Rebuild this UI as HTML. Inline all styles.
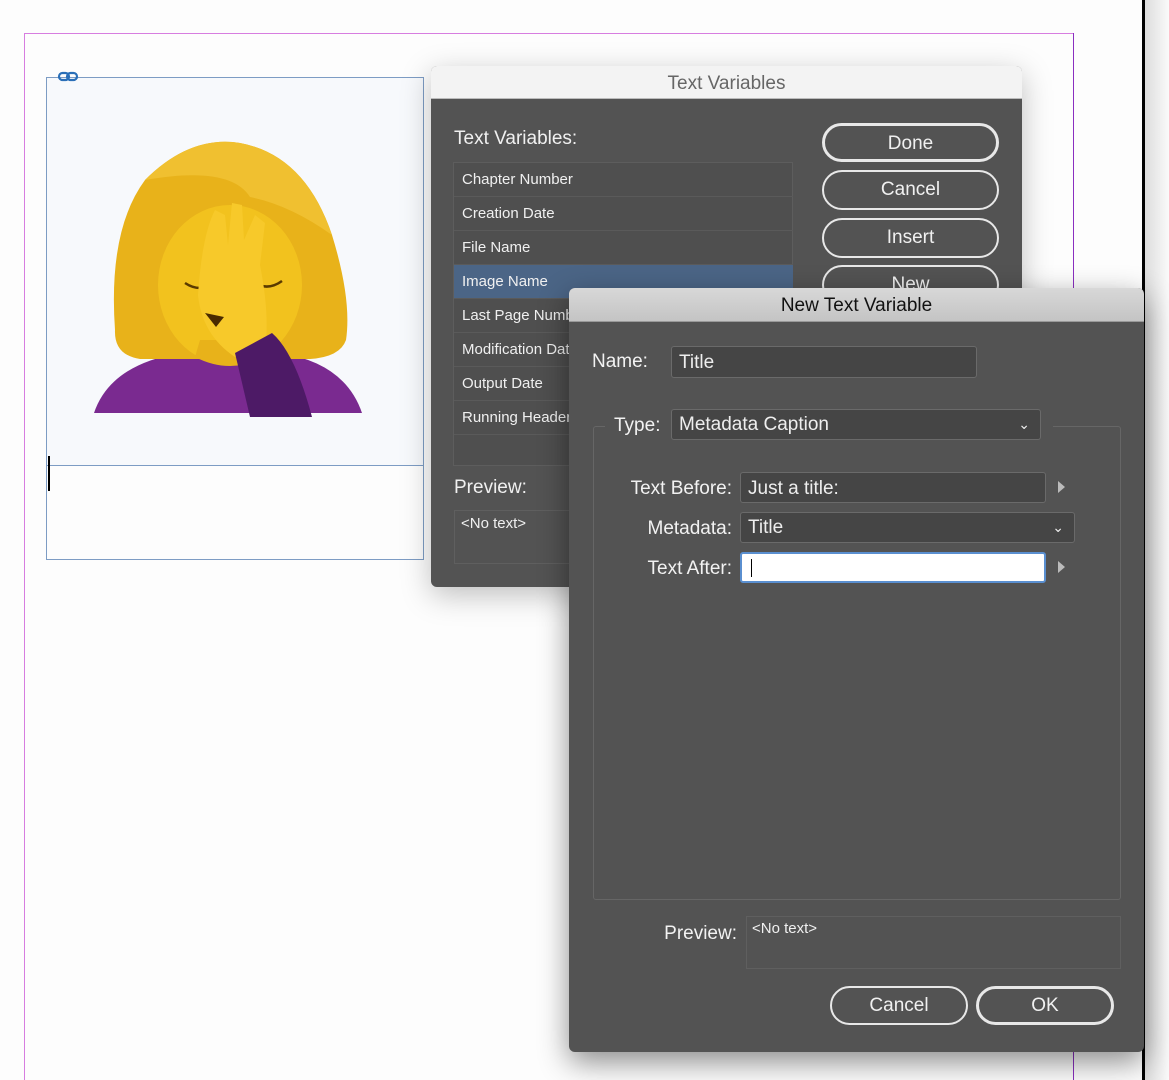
<!DOCTYPE html>
<html><head><meta charset="utf-8"><style>
*{box-sizing:border-box;margin:0;padding:0}
body{width:1169px;height:1080px;background:#fdfdfd;position:relative;overflow:hidden;font-family:"Liberation Sans",sans-serif}
.a{position:absolute}
.dlg{background:#535353;color:#eee}
.btn{position:absolute;border:2px solid #e8e8e8;border-radius:20px;color:#f0f0f0;text-align:center;font-size:19px}
.row{position:absolute;left:0;width:339px;height:34px;border-bottom:1px solid #5a5a5a;font-size:15px;padding-left:8px;line-height:34px;color:#f0f0f0}
.fld{position:absolute;background:#454545;border:1px solid #6a6a6a;border-radius:3px;color:#eee;font-size:19px;padding-left:7px}
.lbl{position:absolute;font-size:19px;color:#f2f2f2;text-align:right}
</style></head><body>
<div class="a" style="left:24px;top:33px;width:1050px;height:1px;background:#d77de0"></div>
<div class="a" style="left:24px;top:33px;width:1px;height:1047px;background:#d77de0"></div>
<div class="a" style="left:1073px;top:33px;width:1px;height:1047px;background:#8a2fc0"></div>
<div class="a" style="left:1142px;top:0;width:3px;height:1080px;background:#000"></div>
<div class="a" style="left:1145px;top:0;width:24px;height:1080px;background:linear-gradient(90deg,#ddd,#fafafa)"></div>
<div class="a" style="left:46px;top:77px;width:378px;height:483px;border:1px solid #7d9cc4;background:#f7f9fc"></div>
<div class="a" style="left:46px;top:465px;width:378px;height:1px;background:#7d9cc4"></div>
<div class="a" style="left:47px;top:466px;width:376px;height:93px;background:#fdfdfd"></div>
<div class="a" style="left:48px;top:456px;width:2px;height:35px;background:#000"></div>
<svg class="a" style="left:57px;top:71px" width="24" height="12"><rect x="2" y="2" width="10" height="7" rx="3.5" fill="none" stroke="#2a6fb8" stroke-width="2.2"/><rect x="10" y="2" width="10" height="7" rx="3.5" fill="none" stroke="#2a6fb8" stroke-width="2.2"/></svg>
<svg class="a" style="left:90px;top:135px" width="280" height="282">
<path d="M4 278 Q20 230 90 218 L190 218 Q255 228 272 278 Z" fill="#7a2a90"/>
<path d="M25 195 Q18 95 55 45 Q100 0 150 8 Q215 20 242 100 Q262 165 256 205 Q250 222 220 224 L50 224 Q24 220 25 195 Z" fill="#e8b21a"/>
<ellipse cx="140" cy="150" rx="72" ry="80" fill="#f2c21e"/>
<path d="M105 222 Q140 240 175 222 L170 205 L110 205 Z" fill="#e8b21a"/>
<path d="M55 45 Q100 0 150 8 Q215 20 242 100 Q200 70 160 62 Q140 30 55 45Z" fill="#f0c030"/>
<path d="M95 148 Q110 158 125 148" stroke="#5a3a00" stroke-width="2.5" fill="none"/>
<path d="M165 148 Q178 156 192 146" stroke="#5a3a00" stroke-width="2.5" fill="none"/>
<path d="M108 160 Q112 100 125 75 L135 80 L138 110 L142 68 L152 70 L154 105 L165 80 L175 88 L170 130 Q180 180 175 215 L145 222 Q112 200 108 160Z" fill="#f7c92a"/>
<path d="M145 218 L182 198 Q205 218 222 282 L160 282 Z" fill="#4d1a66"/>
<path d="M115 178 L134 182 L126 192 Z" fill="#4a2a00"/>
</svg>
<div class="a dlg" style="left:431px;top:66px;width:591px;height:521px;border-radius:6px;box-shadow:0 8px 30px rgba(0,0,0,.25);overflow:hidden">
<div class="a" style="left:0;top:0;width:591px;height:33px;background:#f3f3f3;border-bottom:1px solid #bbb;color:#666;font-size:19px;text-align:center;line-height:36px">Text Variables</div>
<div class="a" style="left:23px;top:62px;font-size:19px;color:#f0f0f0">Text Variables:</div>
<div class="a" style="left:22px;top:96px;width:340px;height:304px;background:#4f4f4f;border:1px solid #5d5d5d">
<div class="row" style="top:0">Chapter Number</div>
<div class="row" style="top:34px">Creation Date</div>
<div class="row" style="top:68px">File Name</div>
<div class="row" style="top:102px;background:#4b6586">Image Name</div>
<div class="row" style="top:136px">Last Page Number</div>
<div class="row" style="top:170px">Modification Date</div>
<div class="row" style="top:204px">Output Date</div>
<div class="row" style="top:238px">Running Header</div>
</div>
<div class="a" style="left:23px;top:411px;font-size:19px;color:#f0f0f0">Preview:</div>
<div class="a" style="left:23px;top:444px;width:340px;height:54px;border:1px solid #5f5f5f;font-size:15px;padding:4px 6px;color:#f0f0f0">&lt;No text&gt;</div>
<div class="btn" style="left:391px;top:57px;width:177px;height:39px;line-height:35px;border-width:3px">Done</div>
<div class="btn" style="left:391px;top:104px;width:177px;height:40px;line-height:36px">Cancel</div>
<div class="btn" style="left:391px;top:152px;width:177px;height:40px;line-height:36px">Insert</div>
<div class="btn" style="left:391px;top:199px;width:177px;height:40px;line-height:36px">New</div>
</div>
<div class="a dlg" style="left:569px;top:288px;width:575px;height:764px;border-radius:6px;box-shadow:0 10px 30px rgba(0,0,0,.45);overflow:hidden">
<div class="a" style="left:0;top:0;width:575px;height:34px;background:linear-gradient(#d8d8d8,#c4c4c4);border-bottom:1px solid #999;color:#111;font-size:19px;text-align:center;line-height:36px">New Text Variable</div>
<div class="lbl" style="left:23px;top:63px">Name:</div>
<div class="fld" style="left:102px;top:58px;width:306px;height:32px;line-height:32px">Title</div>
<div class="a" style="left:24px;top:138px;width:528px;height:474px;border:1px solid #666;border-radius:3px"></div>
<div class="a" style="left:36px;top:120px;width:448px;height:36px;background:#535353"></div>
<div class="lbl" style="left:45px;top:127px">Type:</div>
<div class="fld" style="left:102px;top:121px;width:370px;height:31px;line-height:30px">Metadata Caption<span style="position:absolute;right:10px;top:-1px;font-size:14px">&#8964;</span></div>
<div class="lbl" style="left:40px;top:190px;width:123px">Text Before:</div>
<div class="fld" style="left:171px;top:184px;width:306px;height:31px;line-height:32px">Just a title:</div>
<div class="a" style="left:489px;top:193px;width:0;height:0;border-left:7px solid #bbb;border-top:6px solid transparent;border-bottom:6px solid transparent"></div>
<div class="lbl" style="left:40px;top:230px;width:123px">Metadata:</div>
<div class="fld" style="left:171px;top:224px;width:335px;height:31px;line-height:30px">Title<span style="position:absolute;right:10px;top:-1px;font-size:14px">&#8964;</span></div>
<div class="lbl" style="left:40px;top:270px;width:123px">Text After:</div>
<div class="a" style="left:171px;top:264px;width:306px;height:31px;background:#fff;border:2px solid #5a8fd0;border-radius:3px"><div class="a" style="left:9px;top:5px;width:1px;height:18px;background:#000"></div></div>
<div class="a" style="left:489px;top:273px;width:0;height:0;border-left:7px solid #bbb;border-top:6px solid transparent;border-bottom:6px solid transparent"></div>
<div class="lbl" style="left:40px;top:635px;width:128px">Preview:</div>
<div class="a" style="left:177px;top:628px;width:375px;height:53px;border:1px solid #5f5f5f;font-size:15px;padding:3px 5px;color:#f0f0f0">&lt;No text&gt;</div>
<div class="btn" style="left:261px;top:698px;width:138px;height:39px;line-height:35px">Cancel</div>
<div class="btn" style="left:407px;top:698px;width:138px;height:39px;line-height:34px;border-width:3px">OK</div>
</div>
</body></html>
